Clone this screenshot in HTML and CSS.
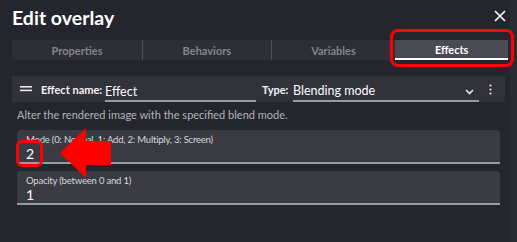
FILE: index.html
```html
<!DOCTYPE html>
<html>
<head>
<meta charset="utf-8">
<link rel="stylesheet" href="styles.css">
</head>
<body>
<div class="page">
  <div class="main">
    <div class="titlebar">
      <div class="title">Edit overlay</div>
      <svg class="close" width="12" height="12" viewBox="0 0 12 12"><path d="M1 1L11 11M11 1L1 11" stroke="#fff" stroke-width="1.6" fill="none"/></svg>
    </div>
    <div class="tabs">
      <div class="tab">Properties</div>
      <div class="sep"></div>
      <div class="tab">Behaviors</div>
      <div class="sep"></div>
      <div class="tab">Variables</div>
      <div class="tab active">Effects<span class="hl hl-tab"></span></div>
    </div>
    <div class="content">
      <div class="effect-row">
        <svg class="handle" width="12" height="6" viewBox="0 0 12 6"><rect x="0" y="0" width="12" height="1.6" fill="#e8e8ec"/><rect x="0" y="3.6" width="12" height="1.6" fill="#e8e8ec"/></svg>
        <span class="lbl">Effect name:</span>
        <div class="input name-input">Effect</div>
        <span class="lbl type-lbl">Type:</span>
        <div class="input select">Blending mode
          <svg class="chev" width="9" height="6" viewBox="0 0 9 6"><path d="M1 1L4.5 4.5L8 1" stroke="#e8e8ec" stroke-width="1.6" fill="none"/></svg>
        </div>
        <svg class="kebab" width="3" height="11" viewBox="0 0 3 11"><circle cx="1.5" cy="1.5" r="1.1" fill="#e8e8ec"/><circle cx="1.5" cy="5.5" r="1.1" fill="#e8e8ec"/><circle cx="1.5" cy="9.5" r="1.1" fill="#e8e8ec"/></svg>
      </div>
      <div class="desc">Alter the rendered image with the specified blend mode.</div>
      <div class="field">
        <div class="flabel">Mode (0: Normal, 1: Add, 2: Multiply, 3: Screen)</div>
        <div class="fvalue"><span class="val-wrap">2<span class="hl hl-val"></span></span></div>
        <svg class="arrow" width="51" height="50" viewBox="0 0 51 50"><path d="M0 25L26 0V13H51V37H26V50Z" fill="#ff0000"/></svg>
      </div>
      <div class="field">
        <div class="flabel">Opacity (between 0 and 1)</div>
        <div class="fvalue">1</div>
      </div>
    </div>
  </div>
  <div class="track"></div>
</div>
</body>
</html>
```

FILE: styles.css
```css
html, body {
  margin: 0;
  padding: 0;
  background: #25252d;
  font-family: "Lato", "Noto Sans", sans-serif;
  color: #f2f2f5;
}
.page {
  display: flex;
  width: 517px;
  height: 242px;
  overflow: hidden;
}
.main {
  flex: 1;
  display: flex;
  flex-direction: column;
}
.track {
  width: 7px;
  background: #2a2a32;
}
.titlebar {
  display: flex;
  align-items: center;
  justify-content: space-between;
  height: 34px;
  padding: 0 4px 0 12px;
}
.title {
  font-size: 19.5px;
  font-weight: 700;
  color: #ffffff;
}
.close {
  margin-top: -2px;
}
.tabs {
  display: flex;
  height: 20px;
  margin: 6px 2px 0 12px;
  background: #2e2e36;
}
.tab {
  flex: 1 1 auto;
  display: flex;
  align-items: center;
  justify-content: center;
  font-size: 11px;
  font-weight: 700;
  color: #85858d;
  position: relative;
  white-space: nowrap;
}
.tab.active {
  background: #4a4a52;
  color: #ffffff;
  border-bottom: 2px solid #ffffff;
  box-sizing: border-box;
}
.sep {
  width: 1px;
  background: #505058;
}
.hl {
  position: absolute;
  border: 3.5px solid #ff0000;
  border-radius: 8px;
  pointer-events: none;
  z-index: 2;
}
.hl-tab {
  left: -5px;
  right: -6px;
  top: -11px;
  bottom: -9px;
}
.content {
  padding: 16px 5px 0 12px;
  display: flex;
  flex-direction: column;
}
.effect-row {
  display: flex;
  align-items: center;
  height: 26px;
  background: #32323a;
  padding: 0 0 0 8px;
  font-size: 11px;
  white-space: nowrap;
}
.effect-row > * {
  flex-shrink: 0;
}
.handle {
  margin-right: 9px;
}
.lbl {
  color: #f2f2f5;
  font-weight: 700;
  width: 58px;
  margin-right: 6px;
}
.input {
  height: 20px;
  line-height: 20px;
  border-bottom: 2px solid #9a9aa2;
  font-size: 12.5px;
  color: #ffffff;
  box-sizing: border-box;
  margin-top: 6px;
}
.name-input {
  width: 151px;
  margin-right: 6px;
}
.type-lbl {
  width: 24px;
  margin-right: 7px;
}
.select {
  width: 186px;
  display: flex;
  align-items: center;
  justify-content: space-between;
  padding-right: 5px;
}
.chev {
  margin-top: 2px;
}
.kebab {
  margin-left: 10px;
}
.desc {
  font-size: 11px;
  color: #b4b4bc;
  padding: 6px 0 0 5px;
  height: 22px;
  box-sizing: border-box;
  white-space: nowrap;
}
.field {
  margin: 6px 5px 0 5px;
  height: 34px;
  background: #3a3a43;
  border-radius: 4px 4px 0 0;
  border-bottom: 2px solid #9a9aa2;
  box-sizing: border-box;
  padding: 3px 9px 0 9px;
  position: relative;
}
.field + .field {
  margin-top: 7px;
}
.flabel {
  font-size: 9.5px;
  letter-spacing: -0.2px;
  color: #d8d8de;
  line-height: 13px;
  white-space: nowrap;
}
.fvalue {
  font-size: 14px;
  color: #ffffff;
  line-height: 16px;
}
.val-wrap {
  position: relative;
}
.hl-val {
  left: -10px;
  right: -9px;
  top: -5px;
  bottom: -5px;
  border-width: 3px;
  border-radius: 6px;
}
.arrow {
  position: absolute;
  left: 43px;
  top: -2px;
  z-index: 3;
}
```
